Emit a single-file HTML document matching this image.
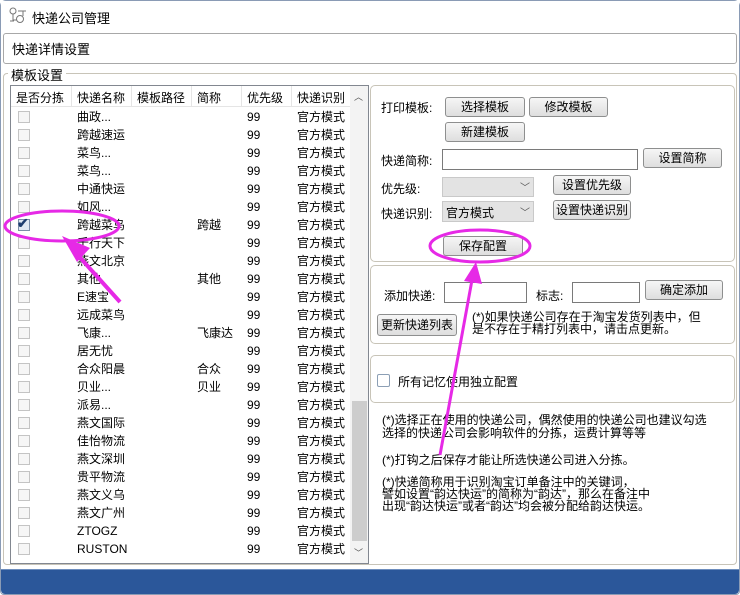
<!DOCTYPE html>
<html><head><meta charset="utf-8"><style>
*{margin:0;padding:0;box-sizing:border-box}
body{width:740px;height:595px;overflow:hidden;background:#fff;font-family:"Liberation Sans","Noto Sans CJK SC",sans-serif;font-size:12px;color:#000;position:relative}
.a{position:absolute;white-space:nowrap}
.btn{position:absolute;border:1px solid #8e8f8f;border-radius:3px;background:linear-gradient(#f6f6f6,#dedede);text-align:center;font-size:12px;line-height:18px}
.inp{position:absolute;border:1px solid #7a7a7a;background:#fff}
.panel{position:absolute;border:1px solid #c8c4b8;border-radius:5px;background:#fff}
.row{position:absolute;left:12px;width:338px;height:18px;font-size:12px;line-height:18px}
.row span{position:absolute}
.cb{position:absolute;left:6px;top:3px;width:12px;height:12px;border:1px solid #c4c4c4;background:#f6f6f6}
</style></head><body>
<div class="a" style="left:0;top:0;width:740px;height:595px;border:1px solid #8a9bb5;border-radius:6px 6px 4px 4px;background:#fff"></div>
<div class="a" style="left:1px;top:1px;width:738px;height:31px;background:#fff"></div>
<svg class="a" style="left:8px;top:7px" width="20" height="18"><circle cx="5" cy="4" r="3" fill="none" stroke="#777"/><circle cx="12" cy="12" r="3.5" fill="none" stroke="#777"/><path d="M5 7v6h4M2 14h4M10 4h8M15 4v5" stroke="#777" fill="none"/></svg>
<div class="a" style="left:32px;top:8px;font-size:13px">快递公司管理</div>
<div class="a" style="left:3px;top:33px;width:734px;height:31px;border:1px solid #a8a8a8;border-radius:3px;background:#fff"></div>
<div class="a" style="left:12px;top:39px;font-size:13px">快递详情设置</div>
<div class="a" style="left:3px;top:73px;width:734px;height:492px;border:1px solid #c8c4b8;border-radius:4px"></div>
<div class="a" style="left:8px;top:65px;background:#fff;padding:0 3px;font-size:13px">模板设置</div>
<!-- grid -->
<div class="a" style="left:10px;top:85px;width:359px;height:479px;border:1px solid #828790;background:#fff;overflow:hidden">
<div class="a" style="left:0;top:0;width:340px;height:21px;background:#fff;border-bottom:1px solid #e5e5e5"></div>
<div class="a" style="left:5px;top:3px">是否分拣</div>
<div class="a" style="left:60px;top:0;height:21px;border-left:1px solid #e5e5e5"></div>
<div class="a" style="left:66px;top:3px">快递名称</div>
<div class="a" style="left:120px;top:0;height:21px;border-left:1px solid #e5e5e5"></div>
<div class="a" style="left:126px;top:3px">模板路径</div>
<div class="a" style="left:180px;top:0;height:21px;border-left:1px solid #e5e5e5"></div>
<div class="a" style="left:186px;top:3px">简称</div>
<div class="a" style="left:230px;top:0;height:21px;border-left:1px solid #e5e5e5"></div>
<div class="a" style="left:236px;top:3px">优先级</div>
<div class="a" style="left:280px;top:0;height:21px;border-left:1px solid #e5e5e5"></div>
<div class="a" style="left:286px;top:3px">快递识别</div>
<div class="a" style="left:339px;top:0;width:18px;height:477px;background:#f3f3f3"></div>
<div class="a" style="left:343px;top:4px;font-size:9px;color:#555">︿</div>
<div class="a" style="left:341px;top:315px;width:15px;height:140px;background:#cdcdcd"></div>
<div class="a" style="left:343px;top:460px;font-size:9px;color:#555">﹀</div>
</div>
<div id="rows"></div>
<script>
var d=[["曲政...","",""],["跨越速运","",""],["菜鸟...","",""],["菜鸟...","",""],["中通快运","",""],["如风...","",""],["跨越菜鸟","跨越",1],["千行天下","",""],["燕文北京","",""],["其他","其他",""],["E速宝","",""],["远成菜鸟","",""],["飞康...","飞康达",""],["居无忧","",""],["合众阳晨","合众",""],["贝业...","贝业",""],["派易...","",""],["燕文国际","",""],["佳怡物流","",""],["燕文深圳","",""],["贵平物流","",""],["燕文义乌","",""],["燕文广州","",""],["ZTOGZ","",""],["RUSTON","",""]];
var h="";d.forEach(function(r,i){var t=108+i*18;
h+='<div class="row" style="top:'+t+'px"><div class="cb"'+(r[2]?' style="border-color:#7a8ea8;background:#dfe8f2"':'')+'></div>'+(r[2]?'<span style="left:5px;top:-2px;color:#1d3d6e;font-size:14px;font-weight:bold">✔</span>':'')+'<span style="left:65px">'+r[0]+'</span><span style="left:185px">'+r[1]+'</span><span style="left:235px">99</span><span style="left:285px">官方模式</span></div>';});
document.getElementById("rows").innerHTML=h;
</script>
<!-- right panels -->
<div class="panel" style="left:370px;top:85px;width:365px;height:177px"></div>
<div class="a" style="left:381px;top:99px">打印模板:</div>
<div class="btn" style="left:445px;top:97px;width:80px;height:20px">选择模板</div>
<div class="btn" style="left:529px;top:97px;width:79px;height:20px">修改模板</div>
<div class="btn" style="left:445px;top:122px;width:80px;height:20px">新建模板</div>
<div class="a" style="left:381px;top:152px">快递简称:</div>
<div class="inp" style="left:442px;top:149px;width:196px;height:21px"></div>
<div class="btn" style="left:643px;top:148px;width:79px;height:20px">设置简称</div>
<div class="a" style="left:381px;top:180px">优先级:</div>
<div class="inp" style="left:442px;top:177px;width:92px;height:20px;background:#e3e3e3;border-color:#c9c9c9"></div>
<div class="a" style="left:520px;top:179px;font-size:10px;color:#555">﹀</div>
<div class="btn" style="left:553px;top:175px;width:78px;height:20px">设置优先级</div>
<div class="a" style="left:381px;top:205px">快递识别:</div>
<div class="inp" style="left:442px;top:201px;width:92px;height:21px;background:#e3e3e3;border-color:#c9c9c9"></div>
<div class="a" style="left:446px;top:204px">官方模式</div>
<div class="a" style="left:520px;top:204px;font-size:10px;color:#555">﹀</div>
<div class="btn" style="left:553px;top:200px;width:78px;height:20px">设置快递识别</div>
<div class="btn" style="left:443px;top:236px;width:80px;height:20px">保存配置</div>
<div class="panel" style="left:370px;top:265px;width:365px;height:79px"></div>
<div class="a" style="left:384px;top:287px">添加快递:</div>
<div class="inp" style="left:444px;top:282px;width:83px;height:21px"></div>
<div class="a" style="left:536px;top:287px">标志:</div>
<div class="inp" style="left:572px;top:282px;width:68px;height:21px"></div>
<div class="btn" style="left:645px;top:280px;width:78px;height:20px">确定添加</div>
<div class="btn" style="left:377px;top:314px;width:80px;height:22px;line-height:20px">更新快递列表</div>
<div class="a" style="left:472px;top:311px;line-height:12px">(*)如果快递公司存在于淘宝发货列表中，但<br>是不存在于精打列表中，请击点更新。</div>
<div class="panel" style="left:370px;top:355px;width:365px;height:48px"></div>
<div class="a" style="left:377px;top:374px;width:13px;height:13px;border:1px solid #8c9fb5;border-radius:2px;background:#fff"></div>
<div class="a" style="left:398px;top:373px">所有记忆使用独立配置</div>
<div class="a" style="left:382px;top:414px;line-height:13px">(*)选择正在使用的快递公司，偶然使用的快递公司也建议勾选<br>选择的快递公司会影响软件的分拣，运费计算等等</div>
<div class="a" style="left:382px;top:451px">(*)打钩之后保存才能让所选快递公司进入分拣。</div>
<div class="a" style="left:382px;top:476px;line-height:12px">(*)快递简称用于识别淘宝订单备注中的关键词，<br>譬如设置“韵达快运”的简称为“韵达”，那么在备注中<br>出现“韵达快运”或者“韵达”均会被分配给韵达快运。</div>
<!-- bottom bar -->
<div class="a" style="left:1px;top:569px;width:738px;height:25px;background:#2b579a;border-top:1px solid #6d8dbd;border-radius:0 0 4px 4px"></div>
<!-- annotations -->
<svg class="a" style="left:0;top:0" width="740" height="595">
<ellipse cx="62" cy="226" rx="57" ry="15" fill="none" stroke="#e629e6" stroke-width="3"/>
<ellipse cx="480" cy="246" rx="50" ry="16" fill="none" stroke="#e629e6" stroke-width="3"/>
<path d="M120 302 L75 252" stroke="#e629e6" stroke-width="4"/>
<path d="M62 236 L90 248 L77 262 Z" fill="#e629e6"/>
<path d="M440 455 L472 280" stroke="#e629e6" stroke-width="3"/>
<path d="M476 262 L482 284 L464 281 Z" fill="#e629e6"/>
</svg>
</body></html>
